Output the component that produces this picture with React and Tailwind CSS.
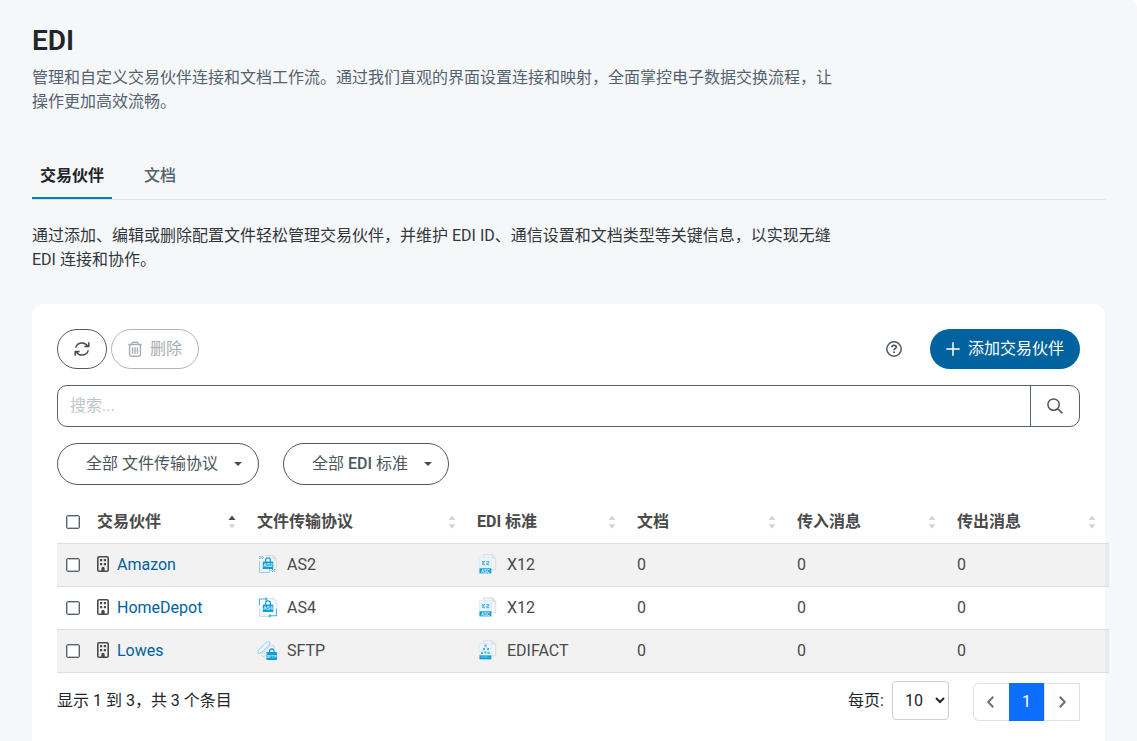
import { useState } from 'react'

const partners = [
  { id: 1, name: 'Amazon', protocol: 'AS2', standard: 'X12', docs: 0, incoming: 0, outgoing: 0 },
  { id: 2, name: 'HomeDepot', protocol: 'AS4', standard: 'X12', docs: 0, incoming: 0, outgoing: 0 },
  { id: 3, name: 'Lowes', protocol: 'SFTP', standard: 'EDIFACT', docs: 0, incoming: 0, outgoing: 0 },
]

const columns = [
  { label: '交易伙伴', width: 'w-[160px]', sorted: true },
  { label: '文件传输协议', width: 'w-[220px]' },
  { label: 'EDI 标准', width: 'w-[160px]' },
  { label: '文档', width: 'w-[160px]' },
  { label: '传入消息', width: 'w-[160px]' },
  { label: '传出消息', width: 'w-[160px]' },
]

const tabs = ['交易伙伴', '文档']

// 16px line icons
const iconPaths = {
  refresh: 'M1.700 6.600A6.500 6.500 0 0 1 13.600 5.200M14.300 9.400A6.500 6.500 0 0 1 2.400 10.800M14.800 1.200V5.600H10.400M1.200 14.800V10.400H5.600',
  trash: 'M1.200 3.500H14.800M4.600 3.300 5.700 1.200H10.300L11.400 3.300M2.600 3.600V13.600Q2.600 15.200 4.200 15.200H11.800Q13.400 15.200 13.400 13.600V3.600M5.600 6.200V12.700M8 6.200V12.700M10.400 6.200V12.700',
  plus: 'M8 1.300V14.700M1.300 8H14.700',
  search: 'M6.600 0.900A5.700 5.700 0 1 1 6.600 12.300A5.700 5.700 0 1 1 6.600 0.900M10.800 10.800 15.400 15.400',
  left: 'M10.300 2.800 5.200 8 10.300 13.200',
  right: 'M5.700 2.800 10.800 8 5.700 13.200',
}

function Icon({ name, stroke = 1.5, className = '' }) {
  return (
    <svg
      width="16" height="16" viewBox="0 0 16 16" fill="none"
      stroke="currentColor" strokeWidth={stroke} strokeLinejoin="round" className={className}
    >
      <path d={iconPaths[name]} />
    </svg>
  )
}

function HelpIcon({ className }) {
  return (
    <svg width="16" height="16" viewBox="0 0 16 16" fill="none" stroke="currentColor" strokeWidth="1.5" className={className}>
      <circle cx="8" cy="8" r="7.200" />
      <path d="M5.800 6.200C5.800 4.900 6.700 4.400 8 4.400s2.300.7 2.300 1.800C10.300 7.500 8 7.500 8 9.200" strokeWidth="1.600" />
      <circle cx="8" cy="11.300" r=".95" fill="currentColor" stroke="none" />
    </svg>
  )
}

function BuildingIcon() {
  return (
    <svg width="16" height="16" viewBox="0 0 16 16" fill="none" className="-mt-px">
      <rect x="2.800" y=".8" width="10.400" height="14.400" rx="1.300" stroke="#4a4a4a" strokeWidth="1.600" />
      <path d="M5 3h2.200v2.200H5zM8.800 3H11v2.200H8.800zM5 7h2.200v2.200H5zM8.800 7H11v2.200H8.800zM6.300 15v-2.500a1.700 1.700 0 0 1 3.400 0V15z" fill="#4a4a4a" />
    </svg>
  )
}

function SortArrows({ sorted }) {
  return (
    <svg width="8" height="14" viewBox="0 0 8 14" className="mr-[13px] -mt-px">
      <path d="M4 0.500 7.500 5H0.500z" fill={sorted ? '#4a4a4a' : '#d6d6d6'} />
      <path d="M4 13.700 7.500 9.200H0.500z" fill="#d6d6d6" />
    </svg>
  )
}

function ProtocolIcon({ type }) {
  if (type === 'SFTP') {
    return (
      <svg width="22" height="22" viewBox="0 0 22 22" fill="none">
        <path d="M1 10.500 9.300 2.200l2.500-.7 1.200 1.200-.6 2.200L4.500 12.600l-3.200 1z" fill="#e6f5fb" stroke="#8fd0ee" strokeWidth="1" />
        <path d="M4.500 14.300 13 5.800l3.500-.6.8 2L9 15.500l-3.300 1.300z" stroke="#cfd5dc" strokeWidth="1" />
        <path d="M12.500 12v-.8a2.300 2.300 0 0 1 4.600 0v.8" stroke="#0b9ddb" strokeWidth="1.200" />
        <rect x="9.500" y="12" width="10.500" height="8" rx=".6" fill="#0b9ddb" />
        <text x="14.700" y="17.700" fontSize="4.300" fontWeight="700" textAnchor="middle" fill="#c9e9f7">SFTP</text>
      </svg>
    )
  }
  return (
    <svg width="22" height="22" viewBox="0 0 22 22" fill="none">
      {type === 'AS2' ? (
        <>
          <path d="M8 1.500h8L19.300 5v9" stroke="#d5dae0" strokeWidth="1" />
          <path d="M16 1.500V5h3.300z" fill="#e3e7eb" stroke="#d5dae0" strokeWidth=".8" />
          <path d="M2.500 7v11.500h10.200V15" stroke="#8fd0ee" strokeWidth="1" />
          <path d="M2.500 2l1.500 1.500L2.500 5M4.800 2l1.500 1.500L4.800 5M16 15l-1.500 1.500L16 18M18.300 15l-1.500 1.500 1.500 1.500" stroke="#3fb0e2" strokeWidth="1" />
        </>
      ) : (
        <>
          <path d="M12.500 1.500h4.500L20 4.500V10M2.500 11v8.500H12" fill="#f1f3f5" stroke="#d5dae0" strokeWidth="1" />
          <path d="M2.500 8.500V2H10M8.500.5 10 2 8.500 3.500M19.500 11.500v7.300H12M13.500 17.300 12 18.800l1.500 1.500" stroke="#3fb0e2" strokeWidth="1.100" />
        </>
      )}
      <path d="M8.600 8V6.300a2.400 2.400 0 0 1 4.800 0V8" stroke="#0b9ddb" strokeWidth="1.200" />
      <rect x="5.800" y="7.500" width="10.500" height="7.600" rx=".6" fill="#0b9ddb" />
      <text x="11" y="13.200" fontSize="5.200" fontWeight="700" textAnchor="middle" fill="#c9e9f7">{type}</text>
    </svg>
  )
}

function StandardIcon({ type }) {
  return (
    <svg width="22" height="22" viewBox="0 0 22 22" fill="none">
      <path d="M6.500.8h8.700L18.700 4.300v11.500H6.500z" fill="#f4f5f7" stroke="#d5dae0" strokeWidth=".9" />
      <path d="M15.200.8v3.500h3.500z" fill="#e3e7eb" stroke="#d5dae0" strokeWidth=".6" />
      <rect x="2.300" y="3.500" width="12.200" height="16" rx=".8" fill="#e8f5fb" stroke="#cdeaf7" strokeWidth=".6" />
      {type === 'X12' ? (
        <>
          <path d="M5 7.500h.8v3.200H5M8 7.500H6.800v3.200H8M9.500 7.500h2.300v1.600H9.800v1.600h2.500" stroke="#3fb0e2" strokeWidth="1" />
          <rect x="2.500" y="14.300" width="11.800" height="5" fill="#0b9ddb" />
          <text x="8.400" y="18.500" fontSize="4.600" fontWeight="700" textAnchor="middle" fill="#d6eef9">ASC</text>
        </>
      ) : (
        <>
          <path d="M7.500 4.500h2v2h-2zM6 8h2v2H6zM10 8h2v2h-2zM4 12h2v2H4zM7.500 11.500h2v2h-2zM10.500 12h2v2h-2z" fill="#3fb0e2" />
          <path d="M8.500 6.500 7 9 5 13M8.500 6.500 11 9l.5 4" stroke="#7fcaed" strokeWidth=".6" />
          <rect x="2.500" y="15.300" width="11.800" height="4" fill="#0b9ddb" />
          <text x="8.400" y="18.400" fontSize="2.600" textAnchor="middle" fill="#8fd0ee">EDIFACT</text>
        </>
      )}
    </svg>
  )
}

function Checkbox({ checked, onChange }) {
  return (
    <input
      type="checkbox" checked={checked} onChange={onChange}
      className="block w-[14px] h-[14px] ml-[9px] appearance-none rounded-[2px] border border-[#54646f] shadow-[inset_0_0_0_1px_#54646f66] bg-white checked:bg-[#0061a0]"
    />
  )
}

function FilterButton({ children, className }) {
  return (
    <button className={`flex items-center h-[42px] pl-7 rounded-full border border-[#4c5c66] text-[#4c5661] ${className}`}>
      {children}
      <span className="ml-4 border-x-[4.5px] border-t-[4.5px] border-x-transparent border-t-[#414c55]" />
    </button>
  )
}

export default function App() {
  const [tab, setTab] = useState(0)
  const [search, setSearch] = useState('')
  const [selected, setSelected] = useState([])

  const toggle = id =>
    setSelected(prev => (prev.includes(id) ? prev.filter(s => s !== id) : [...prev, id]))
  const toggleAll = () =>
    setSelected(prev => (prev.length === partners.length ? [] : partners.map(p => p.id)))

  const filtered = partners.filter(p => p.name.toLowerCase().includes(search.toLowerCase()))

  return (
    <div className="h-screen overflow-hidden rounded-tr-lg bg-[#f6f7f9] px-8 pt-6 text-base leading-6 text-[#212529] font-[Roboto,'Noto_Sans_CJK_SC',sans-serif]">
      <h1 className="text-[28px] leading-[33px] font-semibold">EDI</h1>
      <p className="mt-[9px] w-[808px] text-[#54626f]">
        管理和自定义交易伙伴连接和文档工作流。通过我们直观的界面设置连接和映射，全面掌控电子数据交换流程，让操作更加高效流畅。
      </p>

      {/* Tabs */}
      <div className="flex gap-6 mt-[37px] h-[49px] border-b border-[#dfe2e6]">
        {tabs.map((t, i) => (
          <button
            key={t} onClick={() => setTab(i)}
            className={`h-[48px] px-2 pt-[3px] border-b-2 ${i === tab ? 'font-bold text-[#1f2529] border-[#007cba]' : 'font-medium text-[#54626a] border-transparent'}`}
          >
            {t}
          </button>
        ))}
      </div>

      <p className="mt-6 w-[808px] text-[#30383e]">
        通过添加、编辑或删除配置文件轻松管理交易伙伴，并维护 EDI ID、通信设置和文档类型等关键信息，以实现无缝 EDI 连接和协作。
      </p>

      <div className="mt-8 h-[500px] rounded-xl bg-white px-[25px] pt-[25px]">
        {/* Toolbar */}
        <div className="flex items-center">
          <button className="flex items-center justify-center w-[50px] h-10 rounded-full border border-[#4c5c66] text-[#414c55]">
            <Icon name="refresh" />
          </button>
          <button className="flex items-center gap-[7px] w-[88px] h-10 ml-1 pl-[15px] rounded-full border border-[#b0b7bc] text-[#a5adb3]">
            <Icon name="trash" stroke={1.4} /> 删除
          </button>
          <HelpIcon className="ml-auto text-[#4c5661]" />
          <button className="flex items-center gap-[7px] w-[150px] h-10 ml-7 pl-[15px] rounded-full bg-[#00629f] text-white">
            <Icon name="plus" /> 添加交易伙伴
          </button>
        </div>

        {/* Search */}
        <div className="flex mt-4 h-[42px] rounded-[10px] border border-[#54646f]">
          <input
            type="text" value={search} onChange={e => setSearch(e.target.value)}
            placeholder="搜索..."
            className="flex-1 px-3 placeholder:text-[#bcc6ce] focus:outline-none"
          />
          <button className="flex items-center justify-center w-[49px] border-l border-[#54646f] text-[#4c5661]">
            <Icon name="search" />
          </button>
        </div>

        {/* Filters */}
        <div className="flex gap-6 mt-4">
          <FilterButton className="w-[202px]">全部 文件传输协议</FilterButton>
          <FilterButton className="w-[166px]">
            <span>全部 <span className="font-medium">EDI</span> 标准</span>
          </FilterButton>
        </div>

        <table className="mt-[15px] w-[1052px] table-fixed border-collapse text-[#4a4a4a]">
          <thead>
            <tr className="h-[43px] border-b border-[#dbdfe4]">
              <th className="w-[32px] pt-[2px]">
                <Checkbox checked={selected.length === partners.length} onChange={toggleAll} />
              </th>
              {columns.map(c => (
                <th key={c.label} className={`${c.width} pl-2 pt-[2px] text-left font-bold`}>
                  <div className="flex items-center justify-between">
                    {c.label} <SortArrows sorted={c.sorted} />
                  </div>
                </th>
              ))}
            </tr>
          </thead>
          <tbody>
            {filtered.map(p => (
              <tr key={p.id} className="h-[43px] border-b border-[#dbdfe4] odd:bg-black/5">
                <td><Checkbox checked={selected.includes(p.id)} onChange={() => toggle(p.id)} /></td>
                <td className="pl-[6px]">
                  <span className="flex items-center gap-[6px]">
                    <BuildingIcon />
                    <a href="#" className="text-[#0061a0]">{p.name}</a>
                  </span>
                </td>
                <td className="pl-2">
                  <span className="flex items-center gap-2"><ProtocolIcon type={p.protocol} /> {p.protocol}</span>
                </td>
                <td className="pl-2">
                  <span className="flex items-center gap-2"><StandardIcon type={p.standard} /> {p.standard}</span>
                </td>
                <td className="pl-2">{p.docs}</td>
                <td className="pl-2">{p.incoming}</td>
                <td className="pl-2">{p.outgoing}</td>
              </tr>
            ))}
          </tbody>
        </table>

        {/* Pagination */}
        <div className="flex items-center mt-[7px]">
          <span className="pt-[2px]">显示 1 到 3，共 3 个条目</span>
          <span className="ml-auto pt-[2px]">每页:</span>
          <select className="w-[57px] h-[39px] ml-2 pl-2 rounded-[4px] border border-[#c9d0d8] bg-white">
            <option>10</option>
            <option>25</option>
            <option>50</option>
          </select>
          <div className="flex h-[38px] ml-6 mt-[3px] text-[#6c757d]">
            <button className="flex items-center justify-center w-9 pr-px rounded-l-md border border-r-0 border-[#dee2e6]">
              <Icon name="left" stroke={2} />
            </button>
            <button className="w-[35px] bg-[#0d6efd] text-white">1</button>
            <button className="flex items-center justify-center w-9 border border-[#dee2e6]">
              <Icon name="right" stroke={2} />
            </button>
          </div>
        </div>
      </div>
    </div>
  )
}
